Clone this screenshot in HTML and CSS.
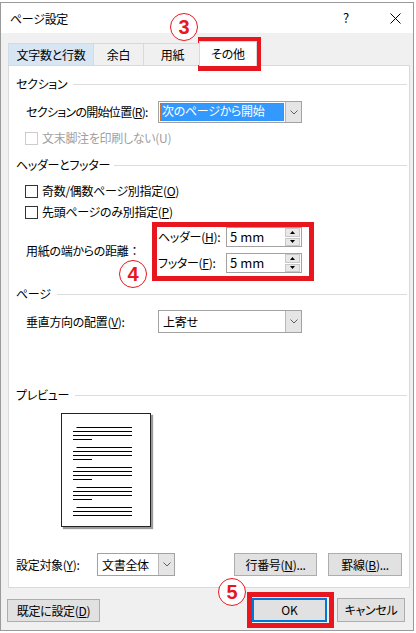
FILE: index.html
```html
<!DOCTYPE html>
<html lang="ja">
<head>
<meta charset="utf-8">
<title>ページ設定</title>
<link rel="stylesheet" href="styles.css">
</head>
<body>
<div class="window">
  <div class="titlebar">
    <span class="title">ページ設定</span>
    <span class="help">?</span>
    <span class="close"><svg width="11" height="11" viewBox="0 0 11 11"><path d="M0.5 0.5 L10.5 10.5 M10.5 0.5 L0.5 10.5" stroke="#000" stroke-width="1" fill="none"/></svg></span>
  </div>
  <div class="client">
    <div class="tabs">
      <div class="tab t1 hover">文字数と行数</div>
      <div class="tab t2">余白</div>
      <div class="tab t3">用紙</div>
      <div class="tab t4 active">その他</div>
    </div>
    <div class="panel">
      <div class="ghead g1"><span>セクション</span><i></i></div>
      <div class="row r1">
        <span class="lbl tight">セクションの開始位置(<u>R</u>):</span>
        <div class="combo wide">
          <span class="val focus"><span class="hl">次のページから開始</span></span>
          <span class="drop"><svg width="8" height="5" viewBox="0 0 8 5"><polyline points="0.5,0.5 4,4 7.5,0.5" stroke="#606060" fill="none"/></svg></span>
        </div>
      </div>
      <div class="check c0 disabled"><span class="box"></span><span>文末脚注を印刷しない(U)</span></div>
      <div class="ghead g2"><span>ヘッダーとフッター</span><i></i></div>
      <div class="check c1"><span class="box"></span><span>奇数/偶数ページ別指定(<u>O</u>)</span></div>
      <div class="check c2"><span class="box"></span><span>先頭ページのみ別指定(<u>P</u>)</span></div>
      <div class="dist">
        <span class="dlbl">用紙の端からの距離<span class="fw">：</span></span>
        <div class="redbox">
          <div class="srow">
            <span class="slbl">ヘッダー(<u>H</u>):</span>
            <div class="spin"><span class="sval">5 mm</span><span class="spinbtns"><span class="sb"><svg width="5" height="3" viewBox="0 0 5 3"><polygon points="2.5,0 5,3 0,3" fill="#000"/></svg></span><span class="sb"><svg width="5" height="3" viewBox="0 0 5 3"><polygon points="0,0 5,0 2.5,3" fill="#000"/></svg></span></span></div>
          </div>
          <div class="srow s2">
            <span class="slbl">フッター(<u>F</u>):</span>
            <div class="spin"><span class="sval">5 mm</span><span class="spinbtns"><span class="sb"><svg width="5" height="3" viewBox="0 0 5 3"><polygon points="2.5,0 5,3 0,3" fill="#000"/></svg></span><span class="sb"><svg width="5" height="3" viewBox="0 0 5 3"><polygon points="0,0 5,0 2.5,3" fill="#000"/></svg></span></span></div>
          </div>
        </div>
      </div>
      <div class="ghead g3"><span>ページ</span><i></i></div>
      <div class="row r2">
        <span class="lbl">垂直方向の配置(<u>V</u>):</span>
        <div class="combo wide tall">
          <span class="val"><span class="plain">上寄せ</span></span>
          <span class="drop"><svg width="8" height="5" viewBox="0 0 8 5"><polyline points="0.5,0.5 4,4 7.5,0.5" stroke="#606060" fill="none"/></svg></span>
        </div>
      </div>
      <div class="ghead g4"><span>プレビュー</span><i></i></div>
      <div class="preview">
        <svg width="90" height="114" viewBox="0 0 90 114">
          <g stroke="#000" stroke-width="1">
            <path d="M15.5 14.5H71 M12 18.5H71 M12 22.5H71 M12 26.5H31"/>
            <path d="M15.5 34.5H71 M12 38.5H71 M12 42.5H71 M12 46.5H31"/>
            <path d="M15.5 54.5H71 M12 58.5H71 M12 62.5H71 M12 66.5H31"/>
            <path d="M15.5 74.5H71 M12 78.5H71 M12 82.5H71 M12 86.5H31"/>
            <path d="M15.5 94.5H71 M12 98.5H71 M12 102.5H71"/>
          </g>
        </svg>
      </div>
      <div class="brow">
        <span class="blbl">設定対象(<u>Y</u>):</span>
        <div class="combo narrow tall">
          <span class="val"><span class="plain">文書全体</span></span>
          <span class="drop"><svg width="8" height="5" viewBox="0 0 8 5"><polyline points="0.5,0.5 4,4 7.5,0.5" stroke="#606060" fill="none"/></svg></span>
        </div>
        <span class="btn lineno">行番号(<u>N</u>)...</span>
        <span class="btn border">罫線(<u>B</u>)...</span>
      </div>
    </div>
    <div class="footer">
      <span class="btn defbtn">既定に設定(<u>D</u>)</span>
      <span class="btn okbtn">OK</span>
      <span class="btn cancel">キャンセル</span>
    </div>
  </div>
</div>
<div class="mark box-tab"></div>
<div class="mark box-ok"></div>
<div class="num n3">3</div>
<div class="num n4">4</div>
<div class="num n5">5</div>
</body>
</html>
```

FILE: styles.css
```css
* { box-sizing: border-box; }
html, body { margin: 0; padding: 0; }
body {
  position: relative;
  width: 416px;
  height: 633px;
  overflow: hidden;
  background: #ffffff;
  font-family: "Noto Sans CJK JP", "Noto Sans", sans-serif;
  font-size: 12px;
  line-height: 16px;
  letter-spacing: -0.3px;
  color: #000;
  font-feature-settings: "palt" 1;
}
u { text-decoration: underline; text-underline-offset: 1px; }

.window {
  margin-top: 2px;
  width: 414px;
  height: 629px;
  border: 1px solid #9a9a9a;
  background: #f0f0f0;
  display: flex;
  flex-direction: column;
}
.titlebar {
  height: 30px;
  background: #ffffff;
  display: flex;
  align-items: center;
  padding-left: 9px;
}
.title { flex: 1; padding-top: 1px; }
.help { width: 12px; margin-right: 38px; text-align: center; font-size: 13px; }
.close { width: 11px; height: 11px; margin-right: 12px; display: flex; }

.client {
  flex: 1;
  padding: 10px 0 0 7px;
  display: flex;
  flex-direction: column;
}
.tabs { display: flex; height: 22px; position: relative; z-index: 2; }
.tab {
  height: 22px;
  border: 1px solid #d9d9d9;
  border-bottom: none;
  display: flex;
  align-items: center;
  justify-content: center;
  background: #f0f0f0;
  padding-top: 1px;
}
.t1 { width: 86px; }
.t2 { width: 51px; margin-left: -1px; }
.t3 { width: 59px; margin-left: -1px; }
.t4 { width: 58px; margin-left: -3px; }
.hover { background: #d8e6f4; border-color: #d0dbe6; }
.active {
  background: #ffffff;
  height: 25px;
  margin-top: -2px;
  padding-top: 0;
}

.panel {
  width: 402px;
  height: 523px;
  border: 1px solid #d9d9d9;
  background: #ffffff;
  display: flex;
  flex-direction: column;
}
.ghead {
  height: 16px;
  display: flex;
  align-items: center;
  gap: 6px;
  padding-left: 7px;
  margin-right: 2px;
}
.ghead i { flex: 1; height: 1px; background: #dcdcdc; }
.g1 { margin-top: 10px; }
.g2 { margin-top: 11px; gap: 4px; }
.g3 { margin-top: 5px; }
.g4 { margin-top: 54px; }

.row { display: flex; align-items: center; padding-left: 17px; }
.row .lbl { width: 132px; }
.row .lbl.tight { letter-spacing: -0.7px; }
.r1 { margin-top: 9px; }
.r2 { margin-top: 8px; }

.combo {
  height: 22px;
  border: 1px solid #a2a2a2;
  background: #ffffff;
  display: flex;
}
.combo.tall { height: 23px; }
.combo.wide { width: 144px; }
.combo.narrow { width: 78px; }
.val { flex: 1; padding: 1px; display: flex; }
.val .hl {
  flex: 1;
  background: #3399ff;
  color: #ffffff;
  padding-left: 2px;
  line-height: 16px;
  outline: 1px dotted #c86a3a;
  outline-offset: -1px;
}
.val .plain { padding-left: 3px; display: flex; align-items: center; }
.drop {
  width: 16px;
  background: #e5e5e5;
  border-left: 1px solid #b9b9b9;
  display: flex;
  align-items: center;
  justify-content: center;
}

.check {
  height: 16px;
  display: flex;
  align-items: center;
  gap: 4px;
  padding-left: 16px;
}
.check .box {
  width: 13px;
  height: 13px;
  border: 1px solid #333333;
  background: #ffffff;
}
.check.disabled { color: #a0a0a0; }
.check.disabled .box { border-color: #cccccc; }
.c0 { margin-top: 7px; }
.c1 { margin-top: 10px; }
.c2 { margin-top: 5px; }

.dist { margin-top: 2px; display: flex; align-items: center; padding-left: 17px; }
.dlbl { width: 126px; padding-bottom: 2px; }
.fw { font-feature-settings: normal; letter-spacing: 0; }
.redbox {
  border: 5px solid #e8161e;
  padding: 0 7px 3px 1px;
}
.srow { display: flex; align-items: center; height: 20px; }
.srow.s2 { margin-top: 6px; }
.slbl { width: 68px; }
.spin {
  width: 76px;
  height: 20px;
  border: 1px solid #a2a2a2;
  background: #fff;
  display: flex;
  align-items: center;
}
.sval { flex: 1; padding-left: 3px; font-size: 13px; letter-spacing: 0; }
.spinbtns {
  width: 15px;
  height: 18px;
  margin-right: 1px;
  display: flex;
  flex-direction: column;
  gap: 1px;
}
.sb {
  flex: 1;
  background: #e8e8e8;
  border: 1px solid #c8c8c8;
  display: flex;
  align-items: center;
  justify-content: center;
}

.preview {
  margin-top: 10px;
  margin-left: 52px;
  width: 90px;
  height: 114px;
  border: 1px solid #222;
  background: #fff;
  box-shadow: 2px 2px 1px #9a9a9a;
}
.preview svg { display: block; margin: -1px 0 0 -1px; }

.brow { margin-top: 26px; display: flex; align-items: center; padding-left: 7px; }
.blbl { width: 81px; }
.btn {
  height: 23px;
  border: 1px solid #adadad;
  background: #e1e1e1;
  display: flex;
  align-items: center;
  justify-content: center;
}
.lineno { width: 83px; margin-left: 59px; }
.border { width: 74px; margin-left: 11px; }

.footer { padding-top: 10px; display: flex; align-items: flex-start; }
.defbtn { width: 93px; margin-left: -1px; margin-top: 1px; }
.okbtn { width: 75px; height: 24px; margin-left: 152px; border: 2px solid #0078d7; letter-spacing: 0; }
.cancel { width: 68px; height: 24px; margin-left: 10px; }

.mark { position: absolute; border: 5px solid #e8161e; }
.box-tab { left: 198px; top: 37px; width: 63px; height: 34px; }
.box-ok { left: 247px; top: 592px; width: 87px; height: 36px; }

.num {
  position: absolute;
  width: 28px;
  height: 28px;
  border: 1px solid #e8161e;
  border-radius: 50%;
  background: #fff;
  color: #e8161e;
  font-family: "Liberation Sans", Arial, sans-serif;
  font-weight: bold;
  font-size: 20px;
  line-height: 26px;
  letter-spacing: 0;
  text-align: center;
}
.n3 { left: 170px; top: 13px; }
.n4 { left: 119px; top: 260px; }
.n5 { left: 218px; top: 578px; }
```
